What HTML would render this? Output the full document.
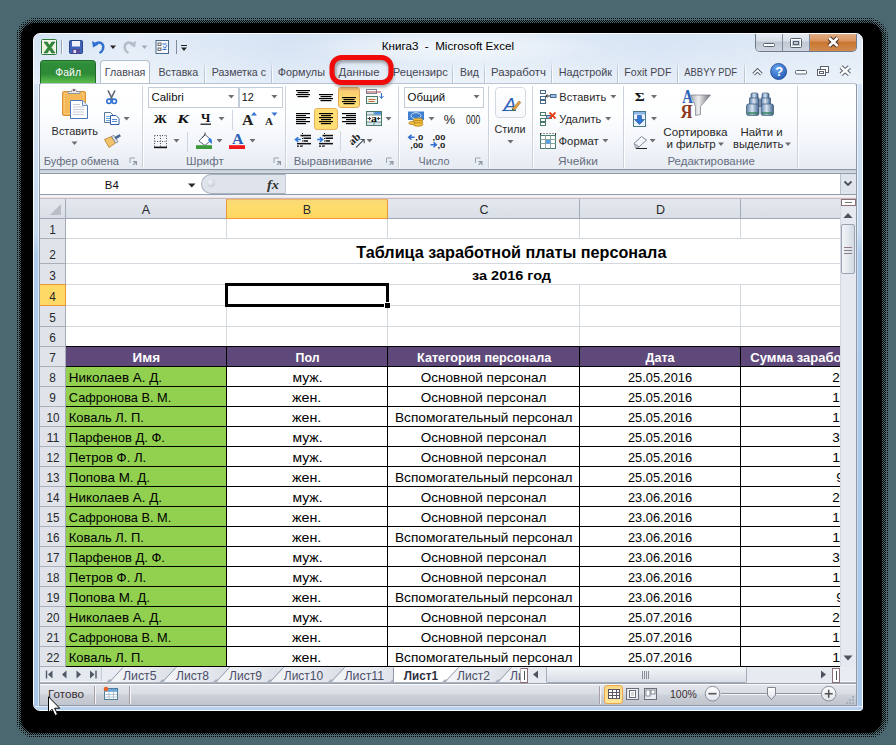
<!DOCTYPE html>
<html><head><meta charset="utf-8">
<title>Excel</title>
<style>
*{box-sizing:border-box;margin:0;padding:0}
html,body{width:896px;height:745px;overflow:hidden}
body{background:#4b6770;font-family:"Liberation Sans",sans-serif;position:relative;font-size:12px;color:#222}
.abs{position:absolute}
#shadow2{position:absolute;left:16px;top:18px;width:872px;height:720px;border-radius:19px;background:repeating-conic-gradient(#000 0 25%,transparent 0 100%) 0 0/2px 2px}
#shadow3{position:absolute;left:19px;top:21px;width:866px;height:714px;border-radius:16px;background:repeating-conic-gradient(#000 0 25%,transparent 0 50%,#000 0 75%,transparent 0 100%) 0 0/2px 2px}
#shadow{position:absolute;left:21px;top:23px;width:861px;height:710px;border-radius:14px;background:#000}
#win{position:absolute;left:33px;top:33px;width:830px;height:678px;border-radius:7px 7px 3px 7px;
 background:linear-gradient(180deg,#d3e2f3 0,#dbe7f5 26px,#e4edf8 50px,#dde8f5 150px,#d3e2f3 195px,#aecaea 212px,#a9c7e9 100%);border:1px solid #fbfdff;overflow:hidden}
#pg{position:absolute;left:-34px;top:-34px;width:896px;height:745px}
.t{position:absolute;white-space:nowrap;line-height:1}
.tab{position:absolute;top:66px;font-size:12px;color:#3c3c3c;white-space:nowrap;line-height:14px}
.tsep{position:absolute;top:62px;width:1px;height:21px;background:linear-gradient(180deg,rgba(160,175,195,0) 0,#b4c0d0 60%,#b4c0d0 100%)}
.cb{font-size:14px;letter-spacing:-0.2px;color:#000}
.ch{font-size:13.5px;color:#27282a}
.rh{font-size:13.5px;color:#27282a}
.rl{font-size:12px;color:#555e6b}
.rt{font-size:12px;color:#1e1e1e}
</style></head><body>
<div id="shadow2"></div><div id="shadow3"></div><div id="shadow"></div>
<div id="win"><div id="pg">
<div class="abs" style="left:300px;top:30px;width:300px;height:34px;background:radial-gradient(ellipse at center,rgba(255,255,255,.55) 0,rgba(255,255,255,.25) 45%,rgba(255,255,255,0) 72%)"></div>
<div class="abs" style="left:34px;top:34px;width:828px;height:50px;background:linear-gradient(100deg,rgba(255,255,255,0) 0,rgba(255,255,255,.35) 12%,rgba(255,255,255,0) 30%,rgba(255,255,255,.3) 55%,rgba(255,255,255,.05) 75%,rgba(255,255,255,.3) 100%)"></div>
<div class="abs" style="left:40px;top:60px;width:56px;height:24px;border-radius:4px 4px 0 0;border:1px solid #1f6b2c;border-bottom:none;background:linear-gradient(180deg,#3a9a40 0,#2f8c38 12%,#2d8a37 55%,#44a544 75%,#62c24a 100%)"></div>
<div class="abs" style="left:100px;top:60px;width:50px;height:25px;border-radius:4px 4px 0 0;border:1px solid #b4bfcd;border-bottom:none;background:linear-gradient(180deg,#fbfcfe 0,#ffffff 100%)"></div>
<div class="abs" style="left:204px;top:61px;width:2px;height:22px;background:linear-gradient(90deg,#b9c4d3 0,#b9c4d3 50%,rgba(255,255,255,.8) 50%);-webkit-mask-image:linear-gradient(180deg,transparent 0,#000 50%)"></div>
<div class="abs" style="left:271px;top:61px;width:2px;height:22px;background:linear-gradient(90deg,#b9c4d3 0,#b9c4d3 50%,rgba(255,255,255,.8) 50%);-webkit-mask-image:linear-gradient(180deg,transparent 0,#000 50%)"></div>
<div class="abs" style="left:452px;top:61px;width:2px;height:22px;background:linear-gradient(90deg,#b9c4d3 0,#b9c4d3 50%,rgba(255,255,255,.8) 50%);-webkit-mask-image:linear-gradient(180deg,transparent 0,#000 50%)"></div>
<div class="abs" style="left:484px;top:61px;width:2px;height:22px;background:linear-gradient(90deg,#b9c4d3 0,#b9c4d3 50%,rgba(255,255,255,.8) 50%);-webkit-mask-image:linear-gradient(180deg,transparent 0,#000 50%)"></div>
<div class="abs" style="left:551px;top:61px;width:2px;height:22px;background:linear-gradient(90deg,#b9c4d3 0,#b9c4d3 50%,rgba(255,255,255,.8) 50%);-webkit-mask-image:linear-gradient(180deg,transparent 0,#000 50%)"></div>
<div class="abs" style="left:617px;top:61px;width:2px;height:22px;background:linear-gradient(90deg,#b9c4d3 0,#b9c4d3 50%,rgba(255,255,255,.8) 50%);-webkit-mask-image:linear-gradient(180deg,transparent 0,#000 50%)"></div>
<div class="abs" style="left:677px;top:61px;width:2px;height:22px;background:linear-gradient(90deg,#b9c4d3 0,#b9c4d3 50%,rgba(255,255,255,.8) 50%);-webkit-mask-image:linear-gradient(180deg,transparent 0,#000 50%)"></div>
<div class="abs" style="left:744px;top:61px;width:2px;height:22px;background:linear-gradient(90deg,#b9c4d3 0,#b9c4d3 50%,rgba(255,255,255,.8) 50%);-webkit-mask-image:linear-gradient(180deg,transparent 0,#000 50%)"></div>
<div class="abs" style="left:755px;top:33px;width:102px;height:19px;border:1px solid #6f7b8c;border-top:none;border-radius:0 0 5px 5px;overflow:hidden;background:#c9d3e0"><div class="abs" style="left:0;top:0;width:27px;height:18px;background:linear-gradient(180deg,#e9edf3 0,#d9dfe8 45%,#c0c8d4 50%,#cfd6e0 100%);border-right:1px solid #7f8a9a"></div><div class="abs" style="left:27px;top:0;width:27px;height:18px;background:linear-gradient(180deg,#e9edf3 0,#d9dfe8 45%,#c0c8d4 50%,#cfd6e0 100%);border-right:1px solid #7f8a9a"></div><div class="abs" style="left:54px;top:0;width:47px;height:18px;background:linear-gradient(180deg,#e4b088 0,#d9935e 45%,#c9762f 50%,#d08a4e 100%)"></div></div>
<svg class="abs" style="left:0;top:0" width="896" height="745" font-family="Liberation Sans">
<text x="381.8" y="50.0" font-size="11" font-weight="normal" font-style="normal" font-family="Liberation Sans" fill="#000" textLength="132.2" lengthAdjust="spacingAndGlyphs">Книга3&#160; -&#160; Microsoft Excel</text>
<text x="55.3" y="76.0" font-size="11" font-weight="normal" font-style="normal" font-family="Liberation Sans" fill="#fff" textLength="25.7" lengthAdjust="spacingAndGlyphs">Файл</text>
<text x="104.8" y="76.0" font-size="11" font-weight="normal" font-style="normal" font-family="Liberation Sans" fill="#454552" textLength="40.6" lengthAdjust="spacingAndGlyphs">Главная</text>
<text x="158.5" y="76.0" font-size="11" font-weight="normal" font-style="normal" font-family="Liberation Sans" fill="#454552" textLength="39.7" lengthAdjust="spacingAndGlyphs">Вставка</text>
<text x="211.8" y="76.0" font-size="11" font-weight="normal" font-style="normal" font-family="Liberation Sans" fill="#454552" textLength="54.2" lengthAdjust="spacingAndGlyphs">Разметка с</text>
<text x="277.8" y="76.0" font-size="11" font-weight="normal" font-style="normal" font-family="Liberation Sans" fill="#454552" textLength="47.2" lengthAdjust="spacingAndGlyphs">Формулы</text>
<text x="338.5" y="76.0" font-size="11" font-weight="normal" font-style="normal" font-family="Liberation Sans" fill="#454552" textLength="41.0" lengthAdjust="spacingAndGlyphs">Данные</text>
<text x="392.8" y="76.0" font-size="11" font-weight="normal" font-style="normal" font-family="Liberation Sans" fill="#454552" textLength="55.0" lengthAdjust="spacingAndGlyphs">Рецензирс</text>
<text x="460.0" y="76.0" font-size="11" font-weight="normal" font-style="normal" font-family="Liberation Sans" fill="#454552" textLength="18.8" lengthAdjust="spacingAndGlyphs">Вид</text>
<text x="491.0" y="76.0" font-size="11" font-weight="normal" font-style="normal" font-family="Liberation Sans" fill="#454552" textLength="55.0" lengthAdjust="spacingAndGlyphs">Разработч</text>
<text x="558.8" y="76.0" font-size="11" font-weight="normal" font-style="normal" font-family="Liberation Sans" fill="#454552" textLength="53.2" lengthAdjust="spacingAndGlyphs">Надстройк</text>
<text x="624.3" y="76.0" font-size="11" font-weight="normal" font-style="normal" font-family="Liberation Sans" fill="#454552" textLength="47.1" lengthAdjust="spacingAndGlyphs">Foxit PDF</text>
<text x="684.3" y="76.0" font-size="11" font-weight="normal" font-style="normal" font-family="Liberation Sans" fill="#454552" textLength="52.7" lengthAdjust="spacingAndGlyphs">ABBYY PDF</text>
<rect x="763.500" y="43.500" width="11" height="3" rx="1" fill="#fff" stroke="#555f6e" stroke-width="1"/>
<rect x="790.500" y="38.500" width="11" height="9" rx="1" fill="none" stroke="#555f6e" stroke-width="1"/><rect x="791.500" y="39.500" width="9" height="7" fill="none" stroke="#fff" stroke-width="1"/><rect x="793.500" y="41.500" width="5" height="3" fill="none" stroke="#555f6e" stroke-width="1"/>
<g stroke-linecap="butt" fill="none"><path d="M829.200 38 l8.400 8 M837.600 38 l-8.400 8" stroke="#4a3328" stroke-width="4.600"/><path d="M829.200 38 l8.400 8 M837.600 38 l-8.400 8" stroke="#fff" stroke-width="2.600"/></g>
<g fill="none" stroke-linejoin="miter"><path d="M753.600 74.300 l3.900-3.900 3.900 3.900" stroke="#5a6270" stroke-width="3.600"/><path d="M753.600 74.300 l3.900-3.900 3.900 3.900" stroke="#fff" stroke-width="1.600"/></g>
<defs><radialGradient id="hg" cx=".4" cy=".3" r=".8"><stop offset="0" stop-color="#6aa5ee"/><stop offset="1" stop-color="#1d56b0"/></radialGradient></defs><circle cx="778.600" cy="71.500" r="8" fill="url(#hg)" stroke="#1a4a9a" stroke-width=".8"/><text x="775.200" y="76.300" font-size="13" font-weight="bold" fill="#fff">?</text>
<rect x="795.500" y="70.500" width="11" height="3.500" rx="1" fill="#fff" stroke="#5a6270" stroke-width="1"/>
<g fill="none" stroke="#5a6270" stroke-width="1"><rect x="820.500" y="66.500" width="8" height="6" fill="#fff"/><rect x="817.500" y="69.500" width="8" height="6" fill="#fff"/><rect x="819.500" y="71.500" width="4" height="2"/></g>
<g fill="none"><path d="M841 67 l8.400 7.400 M849.400 67 l-8.400 7.400" stroke="#5a6270" stroke-width="4.400"/><path d="M841 67 l8.400 7.400 M849.400 67 l-8.400 7.400" stroke="#fff" stroke-width="2.400"/></g>
<rect x="41.500" y="39.500" width="15" height="15" rx="1" fill="#f4f8f0" stroke="#2f7a3a" stroke-width="1"/><rect x="43" y="41" width="12" height="12" fill="#e8f3d8"/><path d="M44 42 l3.200 0 2.300 3.600 2.300-3.600 3.200 0 -3.900 5.500 3.900 5.500 -3.200 0 -2.300-3.600 -2.300 3.600 -3.200 0 3.900-5.500z" fill="#2f8a3a" stroke="#1a5a2a" stroke-width=".5"/>
<path d="M61.500 40 v14" stroke="#9aa5b5"/><path d="M62.500 40 v14" stroke="#fff" opacity=".7"/>
<rect x="69.500" y="40.500" width="13" height="13" rx="1" fill="#3f63b8" stroke="#27448a"/><rect x="72" y="41" width="8" height="5.500" fill="#eef2f8"/><rect x="72" y="49" width="8" height="4.500" fill="#5a4a9a"/><rect x="73.500" y="50" width="2.500" height="3" fill="#dfe5f0"/>
<path d="M95 44 c5-3.500 9.500 0 8 5 c-.5 1.800 -1.800 3.200 -3.500 4" fill="none" stroke="#2f6fd0" stroke-width="2.400"/><path d="M92 41 l1 6.500 5.500-3z" fill="#2f6fd0"/>
<path d="M110 45.500 h6 l-3 3.500z" fill="#222"/>
<path d="M133 44 c-5-3.500 -9.500 0 -8 5 c.5 1.800 1.800 3.200 3.500 4" fill="none" stroke="#b5bcc8" stroke-width="2.400"/><path d="M136 41 l-1 6.500 -5.500-3z" fill="#b5bcc8"/>
<path d="M141.500 45.500 h6 l-3 3.500z" fill="#a5acb8"/>
<rect x="156" y="40.500" width="12.500" height="13" fill="#f4f7fb" stroke="#4a6a8a"/><rect x="158" y="43" width="3" height="2.500" fill="none" stroke="#444" stroke-width=".8"/><rect x="158" y="48" width="3" height="2.500" fill="none" stroke="#444" stroke-width=".8"/><path d="M162.500 44 h4 M162.500 49.500 h4" stroke="#2f6fd0" stroke-width="1.200"/><path d="M163 46.500 l2 1.800 2-3" stroke="#2f6fd0" fill="none"/>
<path d="M176.500 40 v14" stroke="#7f8a9a"/>
<path d="M181 45.500 h6" stroke="#222" stroke-width="1.200"/><path d="M181 47.500 h6 l-3 3.500z" fill="#222"/>
</svg>
<div class="abs" style="left:39px;top:83px;width:818px;height:87px;background:linear-gradient(180deg,#ffffff 0,#fdfeff 30px,#f1f4f9 62px,#e6ebf2 100%);border:1px solid #b9c3d1;border-bottom:1px solid #8b96a7;border-radius:3px 3px 0 0"></div>
<div class="abs" style="left:39px;top:170px;width:818px;height:4px;background:linear-gradient(180deg,#c9d2de 0,#e9eef5 100%)"></div>
<div class="abs" style="left:142px;top:86px;width:2px;height:82px;background:linear-gradient(90deg,#c6ced9 0,#c6ced9 50%,#ffffff 50%,#fff 100%);opacity:.9"></div>
<div class="abs" style="left:285px;top:86px;width:2px;height:82px;background:linear-gradient(90deg,#c6ced9 0,#c6ced9 50%,#ffffff 50%,#fff 100%);opacity:.9"></div>
<div class="abs" style="left:398px;top:86px;width:2px;height:82px;background:linear-gradient(90deg,#c6ced9 0,#c6ced9 50%,#ffffff 50%,#fff 100%);opacity:.9"></div>
<div class="abs" style="left:488px;top:86px;width:2px;height:82px;background:linear-gradient(90deg,#c6ced9 0,#c6ced9 50%,#ffffff 50%,#fff 100%);opacity:.9"></div>
<div class="abs" style="left:532px;top:86px;width:2px;height:82px;background:linear-gradient(90deg,#c6ced9 0,#c6ced9 50%,#ffffff 50%,#fff 100%);opacity:.9"></div>
<div class="abs" style="left:623px;top:86px;width:2px;height:82px;background:linear-gradient(90deg,#c6ced9 0,#c6ced9 50%,#ffffff 50%,#fff 100%);opacity:.9"></div>
<div class="abs" style="left:797px;top:86px;width:2px;height:82px;background:linear-gradient(90deg,#c6ced9 0,#c6ced9 50%,#ffffff 50%,#fff 100%);opacity:.9"></div>
<div class="abs" style="left:148px;top:87px;width:91px;height:21px;background:#fff;border:1px solid #c3ccd9"></div>
<div class="abs" style="left:239px;top:87px;width:44px;height:21px;background:#fff;border:1px solid #c3ccd9"></div>
<div class="abs" style="left:404px;top:87px;width:80px;height:21px;background:#fff;border:1px solid #c3ccd9"></div>
<div class="abs" style="left:338px;top:87px;width:22px;height:21px;background:linear-gradient(180deg,#f9c27a 0,#fbd36e 35%,#ffe27a 100%);border:1px solid #e3a558;border-radius:3px"></div>
<div class="abs" style="left:314px;top:108px;width:24px;height:22px;background:#ffdf73;border:1px solid #e9b461;border-radius:3px"></div>
<div class="abs" style="left:495px;top:87px;width:31px;height:31px;background:linear-gradient(180deg,#fff,#f6f8fb);border:1px solid #d3d9e2;border-radius:4px"></div>
<div class="abs" style="left:232px;top:110px;width:1px;height:20px;background:#d0d6df"></div>
<div class="abs" style="left:187px;top:132px;width:1px;height:20px;background:#d0d6df"></div>
<div class="abs" style="left:340px;top:131px;width:1px;height:20px;background:#d0d6df"></div>
<svg class="abs" style="left:0;top:0" width="896" height="745" font-family="Liberation Sans">
<text x="43.8" y="165.0" font-size="11" font-weight="normal" font-style="normal" font-family="Liberation Sans" fill="#656d7d" textLength="75.2" lengthAdjust="spacingAndGlyphs">Буфер обмена</text>
<text x="186.0" y="165.0" font-size="11" font-weight="normal" font-style="normal" font-family="Liberation Sans" fill="#656d7d" textLength="37.7" lengthAdjust="spacingAndGlyphs">Шрифт</text>
<text x="293.7" y="165.0" font-size="11" font-weight="normal" font-style="normal" font-family="Liberation Sans" fill="#656d7d" textLength="78.7" lengthAdjust="spacingAndGlyphs">Выравнивание</text>
<text x="418.5" y="165.0" font-size="11" font-weight="normal" font-style="normal" font-family="Liberation Sans" fill="#656d7d" textLength="30.9" lengthAdjust="spacingAndGlyphs">Число</text>
<text x="558.0" y="165.0" font-size="11" font-weight="normal" font-style="normal" font-family="Liberation Sans" fill="#656d7d" textLength="39.8" lengthAdjust="spacingAndGlyphs">Ячейки</text>
<text x="667.4" y="165.0" font-size="11" font-weight="normal" font-style="normal" font-family="Liberation Sans" fill="#656d7d" textLength="87.5" lengthAdjust="spacingAndGlyphs">Редактирование</text>
<path d="M130 163.0 v-5 h5" fill="none" stroke="#9aa3b0" stroke-width="1"/><path d="M133 161.0 h4 v4 h-1.2 v-2 l-2.3 2.3 -0.8 -0.8 2.3 -2.3 h-2z" fill="#8d96a3"/>
<path d="M274 163.0 v-5 h5" fill="none" stroke="#9aa3b0" stroke-width="1"/><path d="M277 161.0 h4 v4 h-1.2 v-2 l-2.3 2.3 -0.8 -0.8 2.3 -2.3 h-2z" fill="#8d96a3"/>
<path d="M386.5 163.0 v-5 h5" fill="none" stroke="#9aa3b0" stroke-width="1"/><path d="M389.5 161.0 h4 v4 h-1.2 v-2 l-2.3 2.3 -0.8 -0.8 2.3 -2.3 h-2z" fill="#8d96a3"/>
<path d="M475.5 163.0 v-5 h5" fill="none" stroke="#9aa3b0" stroke-width="1"/><path d="M478.5 161.0 h4 v4 h-1.2 v-2 l-2.3 2.3 -0.8 -0.8 2.3 -2.3 h-2z" fill="#8d96a3"/>
<text x="51.6" y="135.0" font-size="11" font-weight="normal" font-style="normal" font-family="Liberation Sans" fill="#2a2a2a" textLength="46.3" lengthAdjust="spacingAndGlyphs">Вставить</text>
<path d="M71.5 141.5 h6 l-3 3.5z" fill="#6e6e6e"/>
<text x="151.4" y="101.0" font-size="11" font-weight="normal" font-style="normal" font-family="Liberation Sans" fill="#111" textLength="32.5" lengthAdjust="spacingAndGlyphs">Calibri</text>
<text x="241.8" y="101.0" font-size="11" font-weight="normal" font-style="normal" font-family="Liberation Sans" fill="#111" textLength="12.0" lengthAdjust="spacingAndGlyphs">12</text>
<path d="M228.2 95.0 h6 l-3 3.5z" fill="#6e6e6e"/>
<path d="M271.4 95.0 h6 l-3 3.5z" fill="#6e6e6e"/>
<text x="407.6" y="101.0" font-size="11" font-weight="normal" font-style="normal" font-family="Liberation Sans" fill="#111" textLength="37.6" lengthAdjust="spacingAndGlyphs">Общий</text>
<path d="M473.5 95.0 h6 l-3 3.5z" fill="#6e6e6e"/>
<text x="494.6" y="133.0" font-size="11" font-weight="normal" font-style="normal" font-family="Liberation Sans" fill="#2a2a2a" textLength="31.0" lengthAdjust="spacingAndGlyphs">Стили</text>
<path d="M507.5 140.0 h6 l-3 3.5z" fill="#6e6e6e"/>
<text x="559.3" y="101.0" font-size="11" font-weight="normal" font-style="normal" font-family="Liberation Sans" fill="#2a2a2a" textLength="46.9" lengthAdjust="spacingAndGlyphs">Вставить</text>
<path d="M610.4 95.0 h6 l-3 3.5z" fill="#6e6e6e"/>
<text x="559.3" y="123.0" font-size="11" font-weight="normal" font-style="normal" font-family="Liberation Sans" fill="#2a2a2a" textLength="41.9" lengthAdjust="spacingAndGlyphs">Удалить</text>
<path d="M605.2 117.0 h6 l-3 3.5z" fill="#6e6e6e"/>
<text x="558.5" y="145.0" font-size="11" font-weight="normal" font-style="normal" font-family="Liberation Sans" fill="#2a2a2a" textLength="40.2" lengthAdjust="spacingAndGlyphs">Формат</text>
<path d="M602.4 139.0 h6 l-3 3.5z" fill="#6e6e6e"/>
<text x="663.3" y="136.0" font-size="11" font-weight="normal" font-style="normal" font-family="Liberation Sans" fill="#2a2a2a" textLength="64.3" lengthAdjust="spacingAndGlyphs">Сортировка</text>
<text x="666.4" y="148.0" font-size="11" font-weight="normal" font-style="normal" font-family="Liberation Sans" fill="#2a2a2a" textLength="49.2" lengthAdjust="spacingAndGlyphs">и фильтр</text>
<path d="M718 142.5 h6 l-3 3.5z" fill="#6e6e6e"/>
<text x="740.4" y="136.0" font-size="11" font-weight="normal" font-style="normal" font-family="Liberation Sans" fill="#2a2a2a" textLength="42.2" lengthAdjust="spacingAndGlyphs">Найти и</text>
<text x="733.0" y="148.0" font-size="11" font-weight="normal" font-style="normal" font-family="Liberation Sans" fill="#2a2a2a" textLength="50.3" lengthAdjust="spacingAndGlyphs">выделить</text>
<path d="M785 142.5 h6 l-3 3.5z" fill="#6e6e6e"/>
<text x="153.7" y="123.0" font-size="13" font-weight="bold" font-style="normal" font-family="Liberation Serif" fill="#111" textLength="13.1" lengthAdjust="spacingAndGlyphs">Ж</text>
<text x="177.2" y="123.0" font-size="13" font-weight="bold" font-style="italic" font-family="Liberation Serif" fill="#111" textLength="11.7" lengthAdjust="spacingAndGlyphs">К</text>
<text x="201.0" y="122.2" font-size="13" font-weight="bold" font-style="normal" font-family="Liberation Serif" fill="#111" textLength="9.3" lengthAdjust="spacingAndGlyphs">Ч</text>
<rect x="200.5" y="123.6" width="10.5" height="1.2" fill="#111"/>
<path d="M218.5 117.0 h6 l-3 3.5z" fill="#6e6e6e"/>
<text x="242.0" y="124.7" font-size="15" font-weight="bold" font-style="normal" font-family="Liberation Serif" fill="#222" textLength="11.5" lengthAdjust="spacingAndGlyphs">A</text>
<path d="M251 115.5 l3-3.5 3 3.5z" fill="#2f6fd0"/>
<text x="265.0" y="124.7" font-size="11" font-weight="bold" font-style="normal" font-family="Liberation Serif" fill="#222" textLength="8.0" lengthAdjust="spacingAndGlyphs">A</text>
<path d="M271.5 112.5 h6 l-3 3.5z" fill="#2f6fd0"/>
<g stroke="#555" stroke-width="1" stroke-dasharray="1 1.5" fill="none"><path d="M154.5 135.5 h12 M154.5 141.5 h12 M154.5 135.5 v12 M160.5 135.5 v12 M166.5 135.5 v12"/></g><rect x="154" y="146.6" width="13" height="1.6" fill="#111"/>
<path d="M173.5 139.0 h6 l-3 3.5z" fill="#6e6e6e"/>
<path d="M199 141 l6-6.5 6 5.5 -6 5.5z" fill="#fff" stroke="#5a6b80" stroke-width="1"/><path d="M202 138 l3-3 0-2.5" fill="none" stroke="#444" stroke-width="1"/><path d="M209.5 138 c2.5 0.5 3 3.5 2 6 c-1.5 -2 -2.5 -3 -3.5 -4z" fill="#2f78d8"/><rect x="196" y="145.2" width="16" height="3.8" fill="#3c9a3c"/>
<path d="M216.5 139.0 h6 l-3 3.5z" fill="#6e6e6e"/>
<text x="232.0" y="144.0" font-size="14" font-weight="bold" font-style="normal" font-family="Liberation Serif" fill="#2b62b8" textLength="11.5" lengthAdjust="spacingAndGlyphs">A</text>
<rect x="229" y="145.2" width="16" height="3.8" fill="#f01818"/>
<path d="M249.5 139.0 h6 l-3 3.5z" fill="#6e6e6e"/>
<rect x="296.0" y="90.0" width="14" height="1.2" fill="#000"/><rect x="297.5" y="92.0" width="11" height="1.2" fill="#000"/><rect x="296.0" y="94.0" width="14" height="1.2" fill="#000"/><rect x="297.5" y="96.0" width="11" height="1.2" fill="#000"/>
<rect x="319.0" y="94.0" width="14" height="1.2" fill="#000"/><rect x="320.5" y="96.0" width="11" height="1.2" fill="#000"/><rect x="319.0" y="98.0" width="14" height="1.2" fill="#000"/><rect x="320.5" y="100.0" width="11" height="1.2" fill="#000"/>
<rect x="342.0" y="97.0" width="14" height="1.2" fill="#000"/><rect x="343.5" y="99.0" width="11" height="1.2" fill="#000"/><rect x="342.0" y="101.0" width="14" height="1.2" fill="#000"/><rect x="343.5" y="103.0" width="11" height="1.2" fill="#000"/>
<rect x="340.5" y="88.6" width="17" height="1" fill="#d89a4a" opacity=".6"/>
<rect x="296.0" y="113.0" width="14" height="1.2" fill="#000"/><rect x="296.0" y="115.0" width="10" height="1.2" fill="#000"/><rect x="296.0" y="117.0" width="14" height="1.2" fill="#000"/><rect x="296.0" y="119.0" width="10" height="1.2" fill="#000"/><rect x="296.0" y="121.0" width="14" height="1.2" fill="#000"/><rect x="296.0" y="123.0" width="10" height="1.2" fill="#000"/>
<rect x="319.0" y="113.0" width="14" height="1.2" fill="#000"/><rect x="321.0" y="115.0" width="10" height="1.2" fill="#000"/><rect x="319.0" y="117.0" width="14" height="1.2" fill="#000"/><rect x="321.0" y="119.0" width="10" height="1.2" fill="#000"/><rect x="319.0" y="121.0" width="14" height="1.2" fill="#000"/><rect x="321.0" y="123.0" width="10" height="1.2" fill="#000"/>
<rect x="342.0" y="113.0" width="14" height="1.2" fill="#000"/><rect x="346.0" y="115.0" width="10" height="1.2" fill="#000"/><rect x="342.0" y="117.0" width="14" height="1.2" fill="#000"/><rect x="346.0" y="119.0" width="10" height="1.2" fill="#000"/><rect x="342.0" y="121.0" width="14" height="1.2" fill="#000"/><rect x="346.0" y="123.0" width="10" height="1.2" fill="#000"/>
<g fill="none" stroke-width="1"><rect x="366.5" y="89.5" width="10" height="4" stroke="#7b8a9a" fill="#fff"/><path d="M366 92 h15" stroke="#b0455a"/><rect x="366.5" y="96.5" width="11" height="7" stroke="#4a7a6a" fill="#eef3ee"/><path d="M368.5 99.5 h7 M368.5 101.5 h6" stroke="#c2703a"/><path d="M381.5 93 v5 m-2 -2 l2 2.5 2 -2.5" stroke="#2f6fd0"/></g>
<g><rect x="366.500" y="111.500" width="15" height="14" fill="#d9e6f2" stroke="#4a7a6a"/><rect x="367" y="115" width="14" height="7" fill="#fff"/><path d="M366.500 115 h15 M366.500 122 h15" stroke="#4a7a6a" stroke-width=".8"/><path d="M374 111.500 v3.500 M374 122 v3.500" stroke="#6d9a8a"/><rect x="374.500" y="112" width="6.500" height="2.500" fill="#4f8fe0"/><path d="M367.500 118.500 h3 m-1.500-1.500 l1.700 1.500 -1.700 1.500 M380.500 118.500 h-3 m1.500-1.500 l-1.700 1.500 1.700 1.500" stroke="#222" fill="none" stroke-width=".9"/><text x="371" y="121.500" font-size="9.500" font-weight="bold" font-family="Liberation Serif" fill="#111" textLength="6" lengthAdjust="spacingAndGlyphs">a</text></g>
<path d="M385.5 117.0 h6 l-3 3.5z" fill="#6e6e6e"/>
<rect x="300.5" y="134.8" width="10.5" height="1.5" fill="#111"/><rect x="303.5" y="137.5" width="7.5" height="1.5" fill="#111"/><rect x="303.5" y="140.2" width="4.5" height="1.5" fill="#111"/><rect x="297" y="142.9" width="14" height="1.5" fill="#111"/><path d="M297 146.2 h6" stroke="#111" stroke-width="1.2" stroke-dasharray="2 1"/><path d="M302.5 133 v15" stroke="#111" stroke-width="1" stroke-dasharray="1 1.5"/><path d="M300.8 139.6 h-5 m2.4-2.400 l-2.800 2.400 2.800 2.400" fill="none" stroke="#2f78d8" stroke-width="1.500"/>
<rect x="322.5" y="134.8" width="10.5" height="1.5" fill="#111"/><rect x="325.5" y="137.5" width="7.5" height="1.5" fill="#111"/><rect x="325.5" y="140.2" width="4.5" height="1.5" fill="#111"/><rect x="319" y="142.9" width="14" height="1.5" fill="#111"/><path d="M319 146.2 h6" stroke="#111" stroke-width="1.2" stroke-dasharray="2 1"/><path d="M324.5 133 v15" stroke="#111" stroke-width="1" stroke-dasharray="1 1.5"/><path d="M317.3 139.6 h5 m-2.400-2.400 l2.800 2.400 -2.800 2.400" fill="none" stroke="#2f78d8" stroke-width="1.500"/>
<g transform="translate(355.500,139.500) rotate(-42)"><text x="-6.500" y="2.500" font-size="11" font-weight="bold" font-family="Liberation Serif" fill="#222" textLength="12" lengthAdjust="spacingAndGlyphs">ab</text></g><path d="M356 147.500 l8-7.800 m-3.600-.200 l3.800 0 0 3.800" fill="none" stroke="#4a5260" stroke-width="1.100"/>
<path d="M366.6 139.0 h6 l-3 3.5z" fill="#6e6e6e"/>
<g><rect x="408" y="111.5" width="16" height="8.5" fill="#3f7fd0"/><ellipse cx="416" cy="115.7" rx="5" ry="3" fill="none" stroke="#cfe0f5"/><ellipse cx="418" cy="120" rx="5" ry="1.8" fill="#f0c040" stroke="#b07a18" stroke-width=".7"/><ellipse cx="418" cy="122.2" rx="5" ry="1.8" fill="#f0c040" stroke="#b07a18" stroke-width=".7"/><ellipse cx="418" cy="124.4" rx="5" ry="1.8" fill="#f0c040" stroke="#b07a18" stroke-width=".7"/><ellipse cx="412" cy="123" rx="3.2" ry="1.5" fill="#f0c040" stroke="#b07a18" stroke-width=".7"/></g>
<path d="M428.5 117.0 h6 l-3 3.5z" fill="#6e6e6e"/>
<text x="443.8" y="123.8" font-size="13" font-weight="normal" font-style="normal" font-family="Liberation Sans" fill="#1a1a1a" textLength="11.4" lengthAdjust="spacingAndGlyphs">%</text>
<text x="466.0" y="123.8" font-size="12" font-weight="normal" font-style="normal" font-family="Liberation Sans" fill="#1a1a1a" textLength="14.2" lengthAdjust="spacingAndGlyphs">000</text>
<g font-size="7.500" font-weight="bold" fill="#1a1a1a"><text x="415.300" y="140" textLength="8" lengthAdjust="spacingAndGlyphs">,0</text><text x="410.300" y="147.500" textLength="13" lengthAdjust="spacingAndGlyphs">,00</text><text x="432.400" y="140" textLength="13" lengthAdjust="spacingAndGlyphs">,00</text><text x="437.400" y="147.500" textLength="8" lengthAdjust="spacingAndGlyphs">,0</text></g>
<path d="M414.500 137.300 h-5.500 m2.500-2.400 l-2.800 2.400 2.800 2.400" fill="none" stroke="#2f6fd0" stroke-width="1.500"/><path d="M430.500 144.800 h5.500 m-2.500-2.400 l2.800 2.400 -2.800 2.400" fill="none" stroke="#2f6fd0" stroke-width="1.500"/>
<text x="503.5" y="111" font-size="19" font-style="italic" font-family="Liberation Sans" fill="#2b62b8" textLength="13" lengthAdjust="spacingAndGlyphs">A</text><path d="M502 110.5 h14" stroke="#2b62b8" stroke-width="1.2"/><path d="M512 109 l7-8 1.8 1.5 -6.5 8z" fill="#e5a040" stroke="#7a5a20" stroke-width=".5"/><path d="M511 111 l1.5-2.5 2 1.8z" fill="#3a7a4a"/>
<g fill="#fff" stroke="#4a6a8a" stroke-width="1"><rect x="540.5" y="90.5" width="5" height="3"/><rect x="540.5" y="96.5" width="5" height="3"/><rect x="540.5" y="100.5" width="5" height="3"/><rect x="550.5" y="94.5" width="5.5" height="3" fill="#9cc3ee"/></g><path d="M550 96 h-4 m1.5-1.5 l-1.7 1.5 1.7 1.5" fill="none" stroke="#222" stroke-width="1"/>
<g fill="#fff" stroke="#4a7a6a" stroke-width="1"><rect x="540.5" y="112.5" width="5" height="3"/><rect x="540.5" y="118.5" width="5" height="3"/><rect x="540.5" y="122.5" width="5" height="3"/><rect x="546.5" y="115.5" width="5" height="3" fill="#9cc3ee" stroke="#4a6a8a"/></g><path d="M549.5 112.5 l6 6 m0-6 l-6 6" stroke="#e8421a" stroke-width="1.8"/>
<g><rect x="540.5" y="135.5" width="15" height="13" fill="#fff" stroke="#4a7a6a"/><path d="M540.5 139.5 h15 M540.5 143.5 h15 M545.5 135.5 v13 M550.5 135.5 v13" stroke="#8aa89a"/><rect x="546" y="140" width="4.5" height="3.5" fill="#5aa0e8"/><path d="M540.5 133.5 h15" stroke="#333" stroke-dasharray="1 2"/><path d="M540.5 133 v2 M555.5 133 v2" stroke="#333"/></g>
<text x="634.7" y="101.0" font-size="13" font-weight="bold" font-style="normal" font-family="Liberation Serif" fill="#111" textLength="10.0" lengthAdjust="spacingAndGlyphs">Σ</text>
<path d="M651 95.0 h6 l-3 3.5z" fill="#6e6e6e"/>
<rect x="633.5" y="111.5" width="12" height="15" fill="#eaf2fb" stroke="#4a7a8a"/><rect x="634" y="112" width="11" height="2.5" fill="#8fb8e8"/><path d="M637.5 115.5 h4 v4 h3 l-5 5 -5-5 h3z" fill="#2f78d8" stroke="#1c4f9a" stroke-width=".6"/>
<path d="M651 117.0 h6 l-3 3.5z" fill="#6e6e6e"/>
<path d="M634 143.5 l7.5-7 5 3.5 -7.5 7z" fill="#f4f6fa" stroke="#7d8796" stroke-width="1"/><path d="M634 143.5 l5 3.5 -1.5 1 h-2z" fill="#c8ced8" stroke="#7d8796" stroke-width=".6"/><path d="M636 148.5 h11" stroke="#222" stroke-width="1.2"/>
<path d="M649.6 139.0 h6 l-3 3.5z" fill="#6e6e6e"/>
<text x="682.300" y="102.800" font-size="18" font-weight="bold" font-family="Liberation Serif" fill="#2b62b8" textLength="10.600" lengthAdjust="spacingAndGlyphs">A</text><text x="680.600" y="117.800" font-size="18" font-weight="bold" font-family="Liberation Serif" fill="#8a3a22" textLength="12" lengthAdjust="spacingAndGlyphs">Я</text>
<defs><linearGradient id="fg" x1="0" x2="1"><stop offset="0" stop-color="#a4a8b0"/><stop offset=".4" stop-color="#eeeef0"/><stop offset="1" stop-color="#6e7079"/></linearGradient></defs><path d="M690.500 95 H710.500 L700.500 106.500 V114.500 L695.500 115.500 V106.500 Z" fill="url(#fg)" stroke="#7a7d86" stroke-width=".7"/>
<defs><linearGradient id="bg" x1="0" x2="1"><stop offset="0" stop-color="#5b7fa8"/><stop offset=".45" stop-color="#d9e6f3"/><stop offset="1" stop-color="#3f628c"/></linearGradient></defs>
<g stroke="#3a5578" stroke-width=".7"><rect x="751" y="93" width="7" height="6" rx="1.5" fill="url(#bg)"/><rect x="762" y="93" width="7" height="6" rx="1.5" fill="url(#bg)"/><rect x="749.5" y="98" width="9.5" height="9" fill="url(#bg)"/><rect x="761" y="98" width="9.5" height="9" fill="url(#bg)"/><rect x="746.5" y="104" width="12.5" height="11.5" rx="2" fill="url(#bg)"/><rect x="761" y="104" width="12.5" height="11.5" rx="2" fill="url(#bg)"/><rect x="758.5" y="100" width="3" height="6" fill="#7a8fa8"/></g><rect x="747.5" y="112" width="10.5" height="2.5" fill="#2f7a5a" opacity=".7"/><rect x="762" y="112" width="10.5" height="2.5" fill="#2f7a5a" opacity=".7"/>
<rect x="62.5" y="91.5" width="23" height="24" rx="1.5" fill="#f6b95a" stroke="#d9923a" stroke-width="1"/><rect x="64.5" y="93.5" width="19" height="20" fill="none" stroke="#fbd890" stroke-dasharray="1 1.5"/><path d="M68 93.5 h12 v-2 h-3.5 c0-3 -5-3 -5 0 h-3.5z" fill="#e6e9ee" stroke="#7d8796" stroke-width=".8"/><circle cx="74" cy="90.3" r="1" fill="#8a3a4a"/>
<path d="M70.5 100.5 h12 l5 5 v13 h-17z" fill="#fff" stroke="#4a78b8" stroke-width="1"/><path d="M82.5 100.5 v5 h5" fill="#e8eef6" stroke="#4a78b8" stroke-width=".8"/><path d="M73 104.5 h7 M73 107 h11 M73 109.5 h11 M73 112 h11 M73 114.5 h11" stroke="#c5ccd6" stroke-width="1"/>
<path d="M108 90.5 l4.5 9 M115 90.5 l-4.5 9" stroke="#5a6470" stroke-width="1.6" fill="none"/><circle cx="109" cy="101.3" r="2.2" fill="none" stroke="#2f6fd0" stroke-width="1.6"/><circle cx="114.3" cy="101.3" r="2.2" fill="none" stroke="#2f6fd0" stroke-width="1.6"/>
<path d="M104.5 112.500 h6 l3 3 v7 h-9z" fill="#fff" stroke="#5a7a9a"/><path d="M106 116.5 h5 M106 118.5 h5 M106 120.5 h4" stroke="#5a9ae0" stroke-width=".9"/><path d="M110.500 115.500 h5.500 l3 3 v6 h-8.500z" fill="#fff" stroke="#2f5fa8"/><path d="M112 119.500 h5 M112 121.500 h5" stroke="#3f7fd0" stroke-width=".9"/>
<path d="M123.6 117.0 h6 l-3 3.5z" fill="#6e6e6e"/>
<path d="M104.500 139.500 l7-3 4 6.500 -6.500 4.500z" fill="#f2c36a" stroke="#b87a2a" stroke-width=".8"/><path d="M111.500 136.500 l2.500-1.200 4 6.500 -2.500 1.300z" fill="#d8dde5" stroke="#6a7480" stroke-width=".7"/><path d="M115 137 l4.500-2.500 1 1.800 -4.500 2.700z" fill="#4a6a9a" stroke="#2f4a78" stroke-width=".5"/>
</svg>
<div class="abs" id="grid" style="left:40px;top:199px;width:800px;height:468px;background:#fff;overflow:hidden"><div class="abs" style="left:-40px;top:-199px;width:896px;height:745px">
<div class="abs" style="left:40px;top:199px;width:800px;height:19px;background:linear-gradient(180deg,#e4e7ee 0,#dfe3ea 50%,#dadfe7 100%)"></div>
<div class="abs" style="left:40px;top:218px;width:800px;height:1px;background:#9ea7b3"></div>
<div class="abs" style="left:40px;top:219px;width:25px;height:448px;background:#e0e4ea"></div>
<div class="abs" style="left:65px;top:199px;width:1px;height:468px;background:#a4abb6"></div>
<svg class="abs" style="left:40px;top:199px" width="25" height="19"><path d="M21 5 L21 16 L10 16 Z" fill="#b9bec6"/></svg>
<div class="abs" style="left:226px;top:199px;width:1px;height:19px;background:#a4abb6"></div>
<div class="abs" style="left:387px;top:199px;width:1px;height:19px;background:#a4abb6"></div>
<div class="abs" style="left:579px;top:199px;width:1px;height:19px;background:#a4abb6"></div>
<div class="abs" style="left:740px;top:199px;width:1px;height:19px;background:#a4abb6"></div>
<div class="abs" style="left:226px;top:219px;width:1px;height:128px;background:#d4d8df"></div>
<div class="abs" style="left:387px;top:219px;width:1px;height:128px;background:#d4d8df"></div>
<div class="abs" style="left:579px;top:219px;width:1px;height:128px;background:#d4d8df"></div>
<div class="abs" style="left:740px;top:219px;width:1px;height:128px;background:#d4d8df"></div>
<div class="abs" style="left:66px;top:238px;width:774px;height:1px;background:#d4d8df"></div>
<div class="abs" style="left:66px;top:263px;width:774px;height:1px;background:#d4d8df"></div>
<div class="abs" style="left:66px;top:284px;width:774px;height:1px;background:#d4d8df"></div>
<div class="abs" style="left:66px;top:305px;width:774px;height:1px;background:#d4d8df"></div>
<div class="abs" style="left:66px;top:326px;width:774px;height:1px;background:#d4d8df"></div>
<div class="abs" style="left:66px;top:346px;width:774px;height:1px;background:#d4d8df"></div>
<div class="abs" style="left:40px;top:238px;width:25px;height:1px;background:#a9b0ba"></div>
<div class="abs" style="left:40px;top:263px;width:25px;height:1px;background:#a9b0ba"></div>
<div class="abs" style="left:40px;top:284px;width:25px;height:1px;background:#a9b0ba"></div>
<div class="abs" style="left:40px;top:305px;width:25px;height:1px;background:#a9b0ba"></div>
<div class="abs" style="left:40px;top:326px;width:25px;height:1px;background:#a9b0ba"></div>
<div class="abs" style="left:40px;top:346px;width:25px;height:1px;background:#a9b0ba"></div>
<div class="abs" style="left:40px;top:366px;width:25px;height:1px;background:#a9b0ba"></div>
<div class="abs" style="left:40px;top:386px;width:25px;height:1px;background:#a9b0ba"></div>
<div class="abs" style="left:40px;top:406px;width:25px;height:1px;background:#a9b0ba"></div>
<div class="abs" style="left:40px;top:426px;width:25px;height:1px;background:#a9b0ba"></div>
<div class="abs" style="left:40px;top:446px;width:25px;height:1px;background:#a9b0ba"></div>
<div class="abs" style="left:40px;top:466px;width:25px;height:1px;background:#a9b0ba"></div>
<div class="abs" style="left:40px;top:486px;width:25px;height:1px;background:#a9b0ba"></div>
<div class="abs" style="left:40px;top:506px;width:25px;height:1px;background:#a9b0ba"></div>
<div class="abs" style="left:40px;top:526px;width:25px;height:1px;background:#a9b0ba"></div>
<div class="abs" style="left:40px;top:546px;width:25px;height:1px;background:#a9b0ba"></div>
<div class="abs" style="left:40px;top:566px;width:25px;height:1px;background:#a9b0ba"></div>
<div class="abs" style="left:40px;top:586px;width:25px;height:1px;background:#a9b0ba"></div>
<div class="abs" style="left:40px;top:606px;width:25px;height:1px;background:#a9b0ba"></div>
<div class="abs" style="left:40px;top:626px;width:25px;height:1px;background:#a9b0ba"></div>
<div class="abs" style="left:40px;top:646px;width:25px;height:1px;background:#a9b0ba"></div>
<div class="abs" style="left:40px;top:666px;width:25px;height:1px;background:#a9b0ba"></div>
<div class="abs" style="left:66px;top:239px;width:774px;height:24px;background:#fff"></div>
<div class="abs" style="left:66px;top:264px;width:774px;height:20px;background:#fff"></div>
<div class="abs" style="left:226px;top:199px;width:162px;height:20px;background:linear-gradient(180deg,#f9d978 0,#ffdc6b 45%,#ffd75e 100%);border:1px solid #f0963a;border-top-color:#f3b45f"></div>
<div class="abs" style="left:40px;top:284px;width:26px;height:22px;background:#ffd966;border:1px solid #f0963a;border-left:none"></div>
<div class="abs" style="left:66px;top:347px;width:774px;height:19px;background:#5f497a"></div>
<div class="abs" style="left:66px;top:367px;width:160px;height:300px;background:#92d050"></div>
<div class="abs" style="left:226px;top:347px;width:1px;height:320px;background:#000"></div>
<div class="abs" style="left:387px;top:347px;width:1px;height:320px;background:#000"></div>
<div class="abs" style="left:579px;top:347px;width:1px;height:320px;background:#000"></div>
<div class="abs" style="left:740px;top:347px;width:1px;height:320px;background:#000"></div>
<div class="abs" style="left:66px;top:366px;width:774px;height:1px;background:#000"></div>
<div class="abs" style="left:66px;top:386px;width:774px;height:1px;background:#000"></div>
<div class="abs" style="left:66px;top:406px;width:774px;height:1px;background:#000"></div>
<div class="abs" style="left:66px;top:426px;width:774px;height:1px;background:#000"></div>
<div class="abs" style="left:66px;top:446px;width:774px;height:1px;background:#000"></div>
<div class="abs" style="left:66px;top:466px;width:774px;height:1px;background:#000"></div>
<div class="abs" style="left:66px;top:486px;width:774px;height:1px;background:#000"></div>
<div class="abs" style="left:66px;top:506px;width:774px;height:1px;background:#000"></div>
<div class="abs" style="left:66px;top:526px;width:774px;height:1px;background:#000"></div>
<div class="abs" style="left:66px;top:546px;width:774px;height:1px;background:#000"></div>
<div class="abs" style="left:66px;top:566px;width:774px;height:1px;background:#000"></div>
<div class="abs" style="left:66px;top:586px;width:774px;height:1px;background:#000"></div>
<div class="abs" style="left:66px;top:606px;width:774px;height:1px;background:#000"></div>
<div class="abs" style="left:66px;top:626px;width:774px;height:1px;background:#000"></div>
<div class="abs" style="left:66px;top:646px;width:774px;height:1px;background:#000"></div>
<div class="abs" style="left:66px;top:666px;width:774px;height:1px;background:#000"></div>
<div class="abs" style="left:66px;top:346px;width:774px;height:1px;background:#000"></div>
<svg class="abs" style="left:0;top:0" width="896" height="745" font-family="Liberation Sans"><text x="146" y="213.5" font-size="12.5" font-weight="normal" fill="#27282a" text-anchor="middle">A</text><text x="307" y="213.5" font-size="12.5" font-weight="normal" fill="#27282a" text-anchor="middle">B</text><text x="484" y="213.5" font-size="12.5" font-weight="normal" fill="#27282a" text-anchor="middle">C</text><text x="660.5" y="213.5" font-size="12.5" font-weight="normal" fill="#27282a" text-anchor="middle">D</text><text x="49.2" y="233.5" font-size="12" font-weight="normal" font-style="normal" font-family="Liberation Sans" fill="#27282a" textLength="6.6" lengthAdjust="spacingAndGlyphs">1</text><text x="49.2" y="258.5" font-size="12" font-weight="normal" font-style="normal" font-family="Liberation Sans" fill="#27282a" textLength="6.6" lengthAdjust="spacingAndGlyphs">2</text><text x="49.2" y="279.5" font-size="12" font-weight="normal" font-style="normal" font-family="Liberation Sans" fill="#27282a" textLength="6.6" lengthAdjust="spacingAndGlyphs">3</text><text x="49.2" y="300.5" font-size="12" font-weight="normal" font-style="normal" font-family="Liberation Sans" fill="#27282a" textLength="6.6" lengthAdjust="spacingAndGlyphs">4</text><text x="49.2" y="321.5" font-size="12" font-weight="normal" font-style="normal" font-family="Liberation Sans" fill="#27282a" textLength="6.6" lengthAdjust="spacingAndGlyphs">5</text><text x="49.2" y="341.5" font-size="12" font-weight="normal" font-style="normal" font-family="Liberation Sans" fill="#27282a" textLength="6.6" lengthAdjust="spacingAndGlyphs">6</text><text x="49.2" y="361.5" font-size="12" font-weight="normal" font-style="normal" font-family="Liberation Sans" fill="#27282a" textLength="6.6" lengthAdjust="spacingAndGlyphs">7</text><text x="49.2" y="381.5" font-size="12" font-weight="normal" font-style="normal" font-family="Liberation Sans" fill="#27282a" textLength="6.6" lengthAdjust="spacingAndGlyphs">8</text><text x="49.2" y="401.5" font-size="12" font-weight="normal" font-style="normal" font-family="Liberation Sans" fill="#27282a" textLength="6.6" lengthAdjust="spacingAndGlyphs">9</text><text x="46.6" y="421.5" font-size="12" font-weight="normal" font-style="normal" font-family="Liberation Sans" fill="#27282a" textLength="13.0" lengthAdjust="spacingAndGlyphs">10</text><text x="46.6" y="441.5" font-size="12" font-weight="normal" font-style="normal" font-family="Liberation Sans" fill="#27282a" textLength="13.0" lengthAdjust="spacingAndGlyphs">11</text><text x="46.6" y="461.5" font-size="12" font-weight="normal" font-style="normal" font-family="Liberation Sans" fill="#27282a" textLength="13.0" lengthAdjust="spacingAndGlyphs">12</text><text x="46.6" y="481.5" font-size="12" font-weight="normal" font-style="normal" font-family="Liberation Sans" fill="#27282a" textLength="13.0" lengthAdjust="spacingAndGlyphs">13</text><text x="46.6" y="501.5" font-size="12" font-weight="normal" font-style="normal" font-family="Liberation Sans" fill="#27282a" textLength="13.0" lengthAdjust="spacingAndGlyphs">14</text><text x="46.6" y="521.5" font-size="12" font-weight="normal" font-style="normal" font-family="Liberation Sans" fill="#27282a" textLength="13.0" lengthAdjust="spacingAndGlyphs">15</text><text x="46.6" y="541.5" font-size="12" font-weight="normal" font-style="normal" font-family="Liberation Sans" fill="#27282a" textLength="13.0" lengthAdjust="spacingAndGlyphs">16</text><text x="46.6" y="561.5" font-size="12" font-weight="normal" font-style="normal" font-family="Liberation Sans" fill="#27282a" textLength="13.0" lengthAdjust="spacingAndGlyphs">17</text><text x="46.6" y="581.5" font-size="12" font-weight="normal" font-style="normal" font-family="Liberation Sans" fill="#27282a" textLength="13.0" lengthAdjust="spacingAndGlyphs">18</text><text x="46.6" y="601.5" font-size="12" font-weight="normal" font-style="normal" font-family="Liberation Sans" fill="#27282a" textLength="13.0" lengthAdjust="spacingAndGlyphs">19</text><text x="46.6" y="621.5" font-size="12" font-weight="normal" font-style="normal" font-family="Liberation Sans" fill="#27282a" textLength="13.0" lengthAdjust="spacingAndGlyphs">20</text><text x="46.6" y="641.5" font-size="12" font-weight="normal" font-style="normal" font-family="Liberation Sans" fill="#27282a" textLength="13.0" lengthAdjust="spacingAndGlyphs">21</text><text x="46.6" y="661.5" font-size="12" font-weight="normal" font-style="normal" font-family="Liberation Sans" fill="#27282a" textLength="13.0" lengthAdjust="spacingAndGlyphs">22</text><text x="356.3" y="258.2" font-size="17" font-weight="bold" font-style="normal" font-family="Liberation Sans" fill="#000" textLength="310.1" lengthAdjust="spacingAndGlyphs">Таблица заработной платы персонала</text><text x="472.0" y="279.8" font-size="13.5" font-weight="bold" font-style="normal" font-family="Liberation Sans" fill="#000" textLength="79.0" lengthAdjust="spacingAndGlyphs">за 2016 год</text><text x="132.5" y="362.0" font-size="13.5" font-weight="bold" font-style="normal" font-family="Liberation Sans" fill="#fff" textLength="27.5" lengthAdjust="spacingAndGlyphs">Имя</text><text x="295.5" y="362.0" font-size="13.5" font-weight="bold" font-style="normal" font-family="Liberation Sans" fill="#fff" textLength="24.0" lengthAdjust="spacingAndGlyphs">Пол</text><text x="417.0" y="362.0" font-size="13.5" font-weight="bold" font-style="normal" font-family="Liberation Sans" fill="#fff" textLength="134.3" lengthAdjust="spacingAndGlyphs">Категория персонала</text><text x="645.5" y="362.0" font-size="13.5" font-weight="bold" font-style="normal" font-family="Liberation Sans" fill="#fff" textLength="29.0" lengthAdjust="spacingAndGlyphs">Дата</text><text x="750.3" y="362.0" font-size="13.5" font-weight="bold" font-style="normal" font-family="Liberation Sans" fill="#fff" textLength="91.2" lengthAdjust="spacingAndGlyphs">Сумма зарабо</text><text x="68.8" y="382.0" font-size="13.5" font-weight="normal" font-style="normal" font-family="Liberation Sans" fill="#000" textLength="93.2" lengthAdjust="spacingAndGlyphs">Николаев А. Д.</text><text x="292.5" y="382.0" font-size="13.5" font-weight="normal" font-style="normal" font-family="Liberation Sans" fill="#000" textLength="30.0" lengthAdjust="spacingAndGlyphs">муж.</text><text x="420.8" y="382.0" font-size="13.5" font-weight="normal" font-style="normal" font-family="Liberation Sans" fill="#000" textLength="125.5" lengthAdjust="spacingAndGlyphs">Основной персонал</text><text x="628.0" y="382.0" font-size="13.5" font-weight="normal" font-style="normal" font-family="Liberation Sans" fill="#000" textLength="64.0" lengthAdjust="spacingAndGlyphs">25.05.2016</text><text x="832.3" y="382.0" font-size="13.5" font-weight="normal" font-style="normal" font-family="Liberation Sans" fill="#000" textLength="41.5" lengthAdjust="spacingAndGlyphs">21 556</text><text x="68.8" y="402.0" font-size="13.5" font-weight="normal" font-style="normal" font-family="Liberation Sans" fill="#000" textLength="102.5" lengthAdjust="spacingAndGlyphs">Сафронова В. М.</text><text x="292.0" y="402.0" font-size="13.5" font-weight="normal" font-style="normal" font-family="Liberation Sans" fill="#000" textLength="29.3" lengthAdjust="spacingAndGlyphs">жен.</text><text x="420.8" y="402.0" font-size="13.5" font-weight="normal" font-style="normal" font-family="Liberation Sans" fill="#000" textLength="125.5" lengthAdjust="spacingAndGlyphs">Основной персонал</text><text x="628.0" y="402.0" font-size="13.5" font-weight="normal" font-style="normal" font-family="Liberation Sans" fill="#000" textLength="64.0" lengthAdjust="spacingAndGlyphs">25.05.2016</text><text x="832.3" y="402.0" font-size="13.5" font-weight="normal" font-style="normal" font-family="Liberation Sans" fill="#000" textLength="41.5" lengthAdjust="spacingAndGlyphs">15 763</text><text x="68.8" y="422.0" font-size="13.5" font-weight="normal" font-style="normal" font-family="Liberation Sans" fill="#000" textLength="75.0" lengthAdjust="spacingAndGlyphs">Коваль Л. П.</text><text x="292.0" y="422.0" font-size="13.5" font-weight="normal" font-style="normal" font-family="Liberation Sans" fill="#000" textLength="29.3" lengthAdjust="spacingAndGlyphs">жен.</text><text x="395.0" y="422.0" font-size="13.5" font-weight="normal" font-style="normal" font-family="Liberation Sans" fill="#000" textLength="177.5" lengthAdjust="spacingAndGlyphs">Вспомогательный персонал</text><text x="628.0" y="422.0" font-size="13.5" font-weight="normal" font-style="normal" font-family="Liberation Sans" fill="#000" textLength="64.0" lengthAdjust="spacingAndGlyphs">25.05.2016</text><text x="832.3" y="422.0" font-size="13.5" font-weight="normal" font-style="normal" font-family="Liberation Sans" fill="#000" textLength="41.5" lengthAdjust="spacingAndGlyphs">10 543</text><text x="68.8" y="442.0" font-size="13.5" font-weight="normal" font-style="normal" font-family="Liberation Sans" fill="#000" textLength="96.2" lengthAdjust="spacingAndGlyphs">Парфенов Д. Ф.</text><text x="292.5" y="442.0" font-size="13.5" font-weight="normal" font-style="normal" font-family="Liberation Sans" fill="#000" textLength="30.0" lengthAdjust="spacingAndGlyphs">муж.</text><text x="420.8" y="442.0" font-size="13.5" font-weight="normal" font-style="normal" font-family="Liberation Sans" fill="#000" textLength="125.5" lengthAdjust="spacingAndGlyphs">Основной персонал</text><text x="628.0" y="442.0" font-size="13.5" font-weight="normal" font-style="normal" font-family="Liberation Sans" fill="#000" textLength="64.0" lengthAdjust="spacingAndGlyphs">25.05.2016</text><text x="832.3" y="442.0" font-size="13.5" font-weight="normal" font-style="normal" font-family="Liberation Sans" fill="#000" textLength="41.5" lengthAdjust="spacingAndGlyphs">35 254</text><text x="68.8" y="462.0" font-size="13.5" font-weight="normal" font-style="normal" font-family="Liberation Sans" fill="#000" textLength="77.5" lengthAdjust="spacingAndGlyphs">Петров Ф. Л.</text><text x="292.5" y="462.0" font-size="13.5" font-weight="normal" font-style="normal" font-family="Liberation Sans" fill="#000" textLength="30.0" lengthAdjust="spacingAndGlyphs">муж.</text><text x="420.8" y="462.0" font-size="13.5" font-weight="normal" font-style="normal" font-family="Liberation Sans" fill="#000" textLength="125.5" lengthAdjust="spacingAndGlyphs">Основной персонал</text><text x="628.0" y="462.0" font-size="13.5" font-weight="normal" font-style="normal" font-family="Liberation Sans" fill="#000" textLength="64.0" lengthAdjust="spacingAndGlyphs">25.05.2016</text><text x="832.3" y="462.0" font-size="13.5" font-weight="normal" font-style="normal" font-family="Liberation Sans" fill="#000" textLength="41.5" lengthAdjust="spacingAndGlyphs">11 456</text><text x="68.8" y="482.0" font-size="13.5" font-weight="normal" font-style="normal" font-family="Liberation Sans" fill="#000" textLength="81.2" lengthAdjust="spacingAndGlyphs">Попова М. Д.</text><text x="292.0" y="482.0" font-size="13.5" font-weight="normal" font-style="normal" font-family="Liberation Sans" fill="#000" textLength="29.3" lengthAdjust="spacingAndGlyphs">жен.</text><text x="395.0" y="482.0" font-size="13.5" font-weight="normal" font-style="normal" font-family="Liberation Sans" fill="#000" textLength="177.5" lengthAdjust="spacingAndGlyphs">Вспомогательный персонал</text><text x="628.0" y="482.0" font-size="13.5" font-weight="normal" font-style="normal" font-family="Liberation Sans" fill="#000" textLength="64.0" lengthAdjust="spacingAndGlyphs">25.05.2016</text><text x="836.3" y="482.0" font-size="13.5" font-weight="normal" font-style="normal" font-family="Liberation Sans" fill="#000" textLength="34.5" lengthAdjust="spacingAndGlyphs">9 564</text><text x="68.8" y="502.0" font-size="13.5" font-weight="normal" font-style="normal" font-family="Liberation Sans" fill="#000" textLength="93.2" lengthAdjust="spacingAndGlyphs">Николаев А. Д.</text><text x="292.5" y="502.0" font-size="13.5" font-weight="normal" font-style="normal" font-family="Liberation Sans" fill="#000" textLength="30.0" lengthAdjust="spacingAndGlyphs">муж.</text><text x="420.8" y="502.0" font-size="13.5" font-weight="normal" font-style="normal" font-family="Liberation Sans" fill="#000" textLength="125.5" lengthAdjust="spacingAndGlyphs">Основной персонал</text><text x="628.0" y="502.0" font-size="13.5" font-weight="normal" font-style="normal" font-family="Liberation Sans" fill="#000" textLength="64.0" lengthAdjust="spacingAndGlyphs">23.06.2016</text><text x="832.3" y="502.0" font-size="13.5" font-weight="normal" font-style="normal" font-family="Liberation Sans" fill="#000" textLength="41.5" lengthAdjust="spacingAndGlyphs">21 556</text><text x="68.8" y="522.0" font-size="13.5" font-weight="normal" font-style="normal" font-family="Liberation Sans" fill="#000" textLength="102.5" lengthAdjust="spacingAndGlyphs">Сафронова В. М.</text><text x="292.0" y="522.0" font-size="13.5" font-weight="normal" font-style="normal" font-family="Liberation Sans" fill="#000" textLength="29.3" lengthAdjust="spacingAndGlyphs">жен.</text><text x="420.8" y="522.0" font-size="13.5" font-weight="normal" font-style="normal" font-family="Liberation Sans" fill="#000" textLength="125.5" lengthAdjust="spacingAndGlyphs">Основной персонал</text><text x="628.0" y="522.0" font-size="13.5" font-weight="normal" font-style="normal" font-family="Liberation Sans" fill="#000" textLength="64.0" lengthAdjust="spacingAndGlyphs">23.06.2016</text><text x="832.3" y="522.0" font-size="13.5" font-weight="normal" font-style="normal" font-family="Liberation Sans" fill="#000" textLength="41.5" lengthAdjust="spacingAndGlyphs">15 763</text><text x="68.8" y="542.0" font-size="13.5" font-weight="normal" font-style="normal" font-family="Liberation Sans" fill="#000" textLength="75.0" lengthAdjust="spacingAndGlyphs">Коваль Л. П.</text><text x="292.0" y="542.0" font-size="13.5" font-weight="normal" font-style="normal" font-family="Liberation Sans" fill="#000" textLength="29.3" lengthAdjust="spacingAndGlyphs">жен.</text><text x="395.0" y="542.0" font-size="13.5" font-weight="normal" font-style="normal" font-family="Liberation Sans" fill="#000" textLength="177.5" lengthAdjust="spacingAndGlyphs">Вспомогательный персонал</text><text x="628.0" y="542.0" font-size="13.5" font-weight="normal" font-style="normal" font-family="Liberation Sans" fill="#000" textLength="64.0" lengthAdjust="spacingAndGlyphs">23.06.2016</text><text x="832.3" y="542.0" font-size="13.5" font-weight="normal" font-style="normal" font-family="Liberation Sans" fill="#000" textLength="41.5" lengthAdjust="spacingAndGlyphs">11 543</text><text x="68.8" y="562.0" font-size="13.5" font-weight="normal" font-style="normal" font-family="Liberation Sans" fill="#000" textLength="96.2" lengthAdjust="spacingAndGlyphs">Парфенов Д. Ф.</text><text x="292.5" y="562.0" font-size="13.5" font-weight="normal" font-style="normal" font-family="Liberation Sans" fill="#000" textLength="30.0" lengthAdjust="spacingAndGlyphs">муж.</text><text x="420.8" y="562.0" font-size="13.5" font-weight="normal" font-style="normal" font-family="Liberation Sans" fill="#000" textLength="125.5" lengthAdjust="spacingAndGlyphs">Основной персонал</text><text x="628.0" y="562.0" font-size="13.5" font-weight="normal" font-style="normal" font-family="Liberation Sans" fill="#000" textLength="64.0" lengthAdjust="spacingAndGlyphs">23.06.2016</text><text x="832.3" y="562.0" font-size="13.5" font-weight="normal" font-style="normal" font-family="Liberation Sans" fill="#000" textLength="41.5" lengthAdjust="spacingAndGlyphs">35 254</text><text x="68.8" y="582.0" font-size="13.5" font-weight="normal" font-style="normal" font-family="Liberation Sans" fill="#000" textLength="77.5" lengthAdjust="spacingAndGlyphs">Петров Ф. Л.</text><text x="292.5" y="582.0" font-size="13.5" font-weight="normal" font-style="normal" font-family="Liberation Sans" fill="#000" textLength="30.0" lengthAdjust="spacingAndGlyphs">муж.</text><text x="420.8" y="582.0" font-size="13.5" font-weight="normal" font-style="normal" font-family="Liberation Sans" fill="#000" textLength="125.5" lengthAdjust="spacingAndGlyphs">Основной персонал</text><text x="628.0" y="582.0" font-size="13.5" font-weight="normal" font-style="normal" font-family="Liberation Sans" fill="#000" textLength="64.0" lengthAdjust="spacingAndGlyphs">23.06.2016</text><text x="832.3" y="582.0" font-size="13.5" font-weight="normal" font-style="normal" font-family="Liberation Sans" fill="#000" textLength="41.5" lengthAdjust="spacingAndGlyphs">11 456</text><text x="68.8" y="602.0" font-size="13.5" font-weight="normal" font-style="normal" font-family="Liberation Sans" fill="#000" textLength="81.2" lengthAdjust="spacingAndGlyphs">Попова М. Д.</text><text x="292.0" y="602.0" font-size="13.5" font-weight="normal" font-style="normal" font-family="Liberation Sans" fill="#000" textLength="29.3" lengthAdjust="spacingAndGlyphs">жен.</text><text x="395.0" y="602.0" font-size="13.5" font-weight="normal" font-style="normal" font-family="Liberation Sans" fill="#000" textLength="177.5" lengthAdjust="spacingAndGlyphs">Вспомогательный персонал</text><text x="628.0" y="602.0" font-size="13.5" font-weight="normal" font-style="normal" font-family="Liberation Sans" fill="#000" textLength="64.0" lengthAdjust="spacingAndGlyphs">23.06.2016</text><text x="836.3" y="602.0" font-size="13.5" font-weight="normal" font-style="normal" font-family="Liberation Sans" fill="#000" textLength="34.5" lengthAdjust="spacingAndGlyphs">9 564</text><text x="68.8" y="622.0" font-size="13.5" font-weight="normal" font-style="normal" font-family="Liberation Sans" fill="#000" textLength="93.2" lengthAdjust="spacingAndGlyphs">Николаев А. Д.</text><text x="292.5" y="622.0" font-size="13.5" font-weight="normal" font-style="normal" font-family="Liberation Sans" fill="#000" textLength="30.0" lengthAdjust="spacingAndGlyphs">муж.</text><text x="420.8" y="622.0" font-size="13.5" font-weight="normal" font-style="normal" font-family="Liberation Sans" fill="#000" textLength="125.5" lengthAdjust="spacingAndGlyphs">Основной персонал</text><text x="628.0" y="622.0" font-size="13.5" font-weight="normal" font-style="normal" font-family="Liberation Sans" fill="#000" textLength="64.0" lengthAdjust="spacingAndGlyphs">25.07.2016</text><text x="832.3" y="622.0" font-size="13.5" font-weight="normal" font-style="normal" font-family="Liberation Sans" fill="#000" textLength="41.5" lengthAdjust="spacingAndGlyphs">21 556</text><text x="68.8" y="642.0" font-size="13.5" font-weight="normal" font-style="normal" font-family="Liberation Sans" fill="#000" textLength="102.5" lengthAdjust="spacingAndGlyphs">Сафронова В. М.</text><text x="292.0" y="642.0" font-size="13.5" font-weight="normal" font-style="normal" font-family="Liberation Sans" fill="#000" textLength="29.3" lengthAdjust="spacingAndGlyphs">жен.</text><text x="420.8" y="642.0" font-size="13.5" font-weight="normal" font-style="normal" font-family="Liberation Sans" fill="#000" textLength="125.5" lengthAdjust="spacingAndGlyphs">Основной персонал</text><text x="628.0" y="642.0" font-size="13.5" font-weight="normal" font-style="normal" font-family="Liberation Sans" fill="#000" textLength="64.0" lengthAdjust="spacingAndGlyphs">25.07.2016</text><text x="832.3" y="642.0" font-size="13.5" font-weight="normal" font-style="normal" font-family="Liberation Sans" fill="#000" textLength="41.5" lengthAdjust="spacingAndGlyphs">17 763</text><text x="68.8" y="662.0" font-size="13.5" font-weight="normal" font-style="normal" font-family="Liberation Sans" fill="#000" textLength="75.0" lengthAdjust="spacingAndGlyphs">Коваль Л. П.</text><text x="292.0" y="662.0" font-size="13.5" font-weight="normal" font-style="normal" font-family="Liberation Sans" fill="#000" textLength="29.3" lengthAdjust="spacingAndGlyphs">жен.</text><text x="395.0" y="662.0" font-size="13.5" font-weight="normal" font-style="normal" font-family="Liberation Sans" fill="#000" textLength="177.5" lengthAdjust="spacingAndGlyphs">Вспомогательный персонал</text><text x="628.0" y="662.0" font-size="13.5" font-weight="normal" font-style="normal" font-family="Liberation Sans" fill="#000" textLength="64.0" lengthAdjust="spacingAndGlyphs">25.07.2016</text><text x="832.3" y="662.0" font-size="13.5" font-weight="normal" font-style="normal" font-family="Liberation Sans" fill="#000" textLength="41.5" lengthAdjust="spacingAndGlyphs">11 543</text></svg>
<div class="abs" style="left:225px;top:283px;width:164px;height:24px;border:3px solid #000"></div>
<div class="abs" style="left:384px;top:302px;width:6px;height:6px;background:#000;border:1px solid #fff;border-right:none;border-bottom:none"></div>
</div></div>
<div class="abs" style="left:34px;top:84px;width:4px;height:626px;background:linear-gradient(180deg,#d3e2f4 0,#c9dcf0 90px,#c6daf0 150px,#aecaea 170px,#a9c7e9 100%)"></div>
<div class="abs" style="left:858px;top:84px;width:4px;height:626px;background:linear-gradient(180deg,#d3e2f4 0,#c9dcf0 90px,#c6daf0 150px,#aecaea 170px,#a9c7e9 100%)"></div>
<div class="abs" style="left:34px;top:706px;width:828px;height:5px;background:linear-gradient(180deg,#eef4fb 0,#b9d2ed 1.500px,#b4cfec 100%)"></div>
<div class="abs" style="left:39px;top:84px;width:1px;height:622px;background:#8d98a8"></div>
<div class="abs" style="left:856px;top:84px;width:1px;height:622px;background:#8d98a8"></div>
<div class="abs" style="left:39px;top:705px;width:818px;height:1px;background:#8d98a8"></div>
<div class="abs" style="left:38px;top:84px;width:1px;height:622px;background:rgba(255,255,255,.55)"></div>
<div class="abs" style="left:857px;top:84px;width:1px;height:622px;background:rgba(255,255,255,.35)"></div>
<div class="abs" style="left:40px;top:170px;width:816px;height:3px;background:linear-gradient(180deg,#c3cad5 0,#d9dee6 100%)"></div>
<div class="abs" style="left:40px;top:173px;width:816px;height:1px;background:#8f99a8"></div>
<div class="abs" style="left:40px;top:174px;width:816px;height:20px;background:#fff"></div>
<div class="abs" style="left:40px;top:194px;width:816px;height:1px;background:#939dab"></div>
<div class="abs" style="left:40px;top:195px;width:816px;height:4px;background:linear-gradient(180deg,#eef1f6 0,#f6f3f5 55%,#b9a4aa 100%)"></div>
<div class="abs" style="left:201px;top:174px;width:85px;height:20px;background:#dfe3ec;border:1px solid #aab2bf;border-right:1px solid #c5ccd6;border-radius:10px 0 0 10px"></div>
<div class="abs" style="left:207px;top:179px;width:8px;height:8px;border-radius:50%;background:radial-gradient(circle at 40% 35%,#f4f6f9 0,#c9cfd9 70%,#b4bbc7 100%)"></div>
<div class="abs" style="left:840px;top:174px;width:16px;height:20px;background:#e0e4ec;border-left:1px solid #b9c1cd"></div>
<div class="abs" style="left:840px;top:199px;width:16px;height:468px;background:#e6e9ef;border-left:1px solid #d5dae2"></div>
<div class="abs" style="left:841px;top:199px;width:15px;height:7px;background:#fff;border:1px solid #8b6f78"></div>
<div class="abs" style="left:845px;top:202px;width:7px;height:1px;background:#777"></div>
<div class="abs" style="left:841px;top:224px;width:14px;height:50px;background:linear-gradient(90deg,#f1f3f7 0,#e4e8ef 50%,#d3d9e3 100%);border:1px solid #9aa3b1;border-radius:2px"></div>
<div class="abs" style="left:844px;top:247px;width:8px;height:7px;background:repeating-linear-gradient(180deg,#8c7a86 0,#8c7a86 1px,transparent 1px,transparent 3px)"></div>
<div class="abs" style="left:40px;top:667px;width:816px;height:17px;background:#e9ecf2"></div>
<div class="abs" style="left:40px;top:667px;width:62px;height:17px;background:#e4e8ef;border-right:1px solid #c5ccd6"></div>
<div class="abs" style="left:40px;top:681px;width:816px;height:1px;background:#f4f6f9"></div>
<div class="abs" style="left:40px;top:682px;width:816px;height:2px;background:linear-gradient(180deg,#b7bdc8,#8f97a4)"></div>
<div class="abs" style="left:528px;top:667px;width:312px;height:16px;background:#e7eaf0"></div>
<div class="abs" style="left:546px;top:667px;width:201px;height:16px;background:linear-gradient(180deg,#f3f5f8 0,#e6e9ef 50%,#d8dde6 100%);border:1px solid #a4acb8;border-top:none;border-radius:0 0 2px 2px"></div>
<div class="abs" style="left:642px;top:671px;width:8px;height:8px;background:repeating-linear-gradient(90deg,#8c8f9a 0,#8c8f9a 1px,transparent 1px,transparent 2px)"></div>
<div class="abs" style="left:520px;top:668px;width:8px;height:15px;background:#fff;border:1px solid #8b6f78"></div><div class="abs" style="left:524px;top:671px;width:1px;height:9px;background:#555"></div>
<div class="abs" style="left:832px;top:668px;width:8px;height:15px;background:#fff;border:1px solid #8b6f78"></div><div class="abs" style="left:836px;top:671px;width:1px;height:9px;background:#555"></div>
<div class="abs" style="left:40px;top:684px;width:816px;height:21px;background:linear-gradient(180deg,#fafbfc 0,#fafbfc 1px,#e2e5eb 1px,#d9dde4 45%,#cbd0d9 55%,#bfc4cd 100%)"></div>
<div class="abs" style="left:94px;top:686px;width:2px;height:18px;background:linear-gradient(90deg,#a99ea6 0,#a99ea6 50%,#f4f6f9 50%)"></div>
<div class="abs" style="left:129px;top:686px;width:2px;height:18px;background:linear-gradient(90deg,#a99ea6 0,#a99ea6 50%,#f4f6f9 50%)"></div>
<div class="abs" style="left:599px;top:686px;width:2px;height:18px;background:linear-gradient(90deg,#a99ea6 0,#a99ea6 50%,#f4f6f9 50%)"></div>
<div class="abs" style="left:604px;top:685px;width:19px;height:19px;background:linear-gradient(180deg,#fbd784,#ffe59a);border:1px solid #e8a94e;border-radius:3px"></div>
<svg class="abs" style="left:0;top:0" width="896" height="745" font-family="Liberation Sans">
<text x="104.8" y="189.0" font-size="11" font-weight="normal" font-style="normal" font-family="Liberation Sans" fill="#111" textLength="14.0" lengthAdjust="spacingAndGlyphs">B4</text>
<path d="M188 183.500 h7.500 l-3.750 4z" fill="#2b2b2b"/>
<text x="267" y="189" font-size="13" font-weight="bold" font-style="italic" font-family="Liberation Serif" fill="#333" textLength="12" lengthAdjust="spacingAndGlyphs">fx</text>
<path d="M844.500 181.500 l3.500 3.500 3.500-3.500" fill="none" stroke="#4a4f5a" stroke-width="1.800"/>
<path d="M843.500 218 h9 l-4.500-5z" fill="#4d5360"/>
<path d="M843.500 655.500 h9 l-4.500 5z" fill="#4d5360"/>
<path d="M46.500 670.500 v8" stroke="#505765" stroke-width="1.400"/><path d="M52.500 670.500 v8 l-4.500-4z" fill="#505765"/>
<path d="M66.500 670.500 v8 l-4.500-4z" fill="#505765"/>
<path d="M76.500 670.500 v8 l4.500-4z" fill="#505765"/>
<path d="M90 670.500 v8 l4.500-4z" fill="#505765"/><path d="M96 670.500 v8" stroke="#505765" stroke-width="1.400"/>
<path d="M538 670.500 v8 l-5-4z" fill="#4d5360"/><path d="M821 670.500 v8 l5-4z" fill="#4d5360"/>
<defs><linearGradient id="tg" x1="0" x2="1"><stop offset="0" stop-color="#f3f5f8"/><stop offset=".55" stop-color="#e9ecf1"/><stop offset="1" stop-color="#d9dde5"/></linearGradient></defs>
<clipPath id="tc"><rect x="102" y="667" width="418.500" height="15"/></clipPath><g clip-path="url(#tc)">
<path d="M109.5 682 L123.0 667.500 H176.5 L162.5 682z" fill="url(#tg)"/><path d="M109.5 682 L123.0 667.500" stroke="#8e98a8" fill="none"/><path d="M106.5 682 h4 l2-2.500 h-3.500z" fill="#aab2bf"/>
<path d="M162.5 682 L176.0 667.500 H230 L216 682z" fill="url(#tg)"/><path d="M162.5 682 L176.0 667.500" stroke="#8e98a8" fill="none"/><path d="M159.5 682 h4 l2-2.500 h-3.500z" fill="#aab2bf"/>
<path d="M216 682 L229.5 667.500 H284 L270 682z" fill="url(#tg)"/><path d="M216 682 L229.5 667.500" stroke="#8e98a8" fill="none"/><path d="M213 682 h4 l2-2.500 h-3.500z" fill="#aab2bf"/>
<path d="M270 682 L283.5 667.500 H345 L331 682z" fill="url(#tg)"/><path d="M270 682 L283.5 667.500" stroke="#8e98a8" fill="none"/><path d="M267 682 h4 l2-2.500 h-3.500z" fill="#aab2bf"/>
<path d="M331 682 L344.5 667.500 H407.5 L393.5 682z" fill="url(#tg)"/><path d="M331 682 L344.5 667.500" stroke="#8e98a8" fill="none"/><path d="M328 682 h4 l2-2.500 h-3.500z" fill="#aab2bf"/>
<path d="M393.5 682 V667 H459 L445 682z" fill="#fff"/><path d="M393.5 682 V667.500" stroke="#8e98a8" fill="none"/><path d="M390.0 682 h3.500 v-3.500z" fill="#a9b1be"/>
<path d="M445 682 L458.5 667.500 H512 L498 682z" fill="url(#tg)"/><path d="M445 682 L458.5 667.500" stroke="#8e98a8" fill="none"/><path d="M442 682 h4 l2-2.500 h-3.500z" fill="#aab2bf"/>
<path d="M498 682 L511.5 667.500 H565 L551 682z" fill="url(#tg)"/><path d="M498 682 L511.5 667.500" stroke="#8e98a8" fill="none"/><path d="M495 682 h4 l2-2.500 h-3.500z" fill="#aab2bf"/>
<text x="123.0" y="680.0" font-size="13" font-weight="normal" font-style="normal" font-family="Liberation Sans" fill="#4a4d68" textLength="33.5" lengthAdjust="spacingAndGlyphs">Лист5</text>
<text x="176.0" y="680.0" font-size="13" font-weight="normal" font-style="normal" font-family="Liberation Sans" fill="#4a4d68" textLength="33.0" lengthAdjust="spacingAndGlyphs">Лист8</text>
<text x="229.0" y="680.0" font-size="13" font-weight="normal" font-style="normal" font-family="Liberation Sans" fill="#4a4d68" textLength="33.0" lengthAdjust="spacingAndGlyphs">Лист9</text>
<text x="283.8" y="680.0" font-size="13" font-weight="normal" font-style="normal" font-family="Liberation Sans" fill="#4a4d68" textLength="39.4" lengthAdjust="spacingAndGlyphs">Лист10</text>
<text x="344.5" y="680.0" font-size="13" font-weight="normal" font-style="normal" font-family="Liberation Sans" fill="#4a4d68" textLength="39.7" lengthAdjust="spacingAndGlyphs">Лист11</text>
<text x="403.8" y="680.0" font-size="13" font-weight="bold" font-style="normal" font-family="Liberation Sans" fill="#2e2e3e" textLength="34.2" lengthAdjust="spacingAndGlyphs">Лист1</text>
<text x="457.0" y="680.0" font-size="13" font-weight="normal" font-style="normal" font-family="Liberation Sans" fill="#4a4d68" textLength="33.0" lengthAdjust="spacingAndGlyphs">Лист2</text>
<text x="510.0" y="680.0" font-size="13" font-weight="normal" font-style="normal" font-family="Liberation Sans" fill="#4a4d68" textLength="33.0" lengthAdjust="spacingAndGlyphs">Лист3</text>
</g>
<text x="48.0" y="698.0" font-size="11" font-weight="normal" font-style="normal" font-family="Liberation Sans" fill="#3a2e30" textLength="36.0" lengthAdjust="spacingAndGlyphs">Готово</text>
<text x="670.0" y="698.0" font-size="11" font-weight="normal" font-style="normal" font-family="Liberation Sans" fill="#3a2e30" textLength="26.8" lengthAdjust="spacingAndGlyphs">100%</text>
<rect x="104.500" y="688.500" width="13" height="11" fill="#fff" stroke="#4a7a9a"/><path d="M104.500 691.500 h13 M104.500 694.500 h13 M104.500 697 h13 M109 688.500 v11 M113.500 688.500 v11" stroke="#9ab5c8" stroke-width=".8"/><rect x="105" y="689" width="12" height="2.500" fill="#6aa5d8"/><circle cx="106" cy="689" r="2.300" fill="#e8632a"/>
<g fill="#fff" stroke="#5a5560" stroke-width="1"><rect x="608.500" y="689.500" width="11" height="9"/></g><path d="M608.500 692.500 h11 M608.500 695.500 h11 M612.500 689.500 v9 M616.500 689.500 v9" stroke="#5a5560" stroke-width="1"/>
<rect x="626.500" y="688.500" width="12" height="11" fill="#e9ecf1" stroke="#6a6f7a"/><rect x="629.500" y="690.500" width="6" height="7" fill="#fff" stroke="#6a6f7a"/><path d="M631 693 h3 M631 695 h3" stroke="#999" stroke-width=".8"/>
<rect x="644.500" y="688.500" width="12" height="11" fill="#e9ecf1" stroke="#6a6f7a"/><rect x="646" y="690" width="4" height="6" fill="#fff" stroke="#6a6f7a" stroke-width=".8"/><rect x="651" y="690" width="4" height="4" fill="#fff" stroke="#6a6f7a" stroke-width=".8"/>
<defs><linearGradient id="zg" x1="0" y1="0" x2="0" y2="1"><stop offset="0" stop-color="#ffffff"/><stop offset="1" stop-color="#dfe3ea"/></linearGradient></defs>
<circle cx="712.500" cy="693.700" r="7.300" fill="url(#zg)" stroke="#8a8f9a" stroke-width="1"/><path d="M708.500 693.700 h8" stroke="#555" stroke-width="1.600"/>
<circle cx="828.700" cy="693.700" r="7.300" fill="url(#zg)" stroke="#8a8f9a" stroke-width="1"/><path d="M824.700 693.700 h8 M828.700 689.700 v8" stroke="#555" stroke-width="1.600"/>
<path d="M721 693.500 h100" stroke="#8f949e" stroke-width="1"/><path d="M721 694.500 h100" stroke="#f6f7f9" stroke-width="1"/>
<path d="M767.500 687.500 h8 v7.500 l-4 4.500 -4-4.500z" fill="url(#zg)" stroke="#7f848e" stroke-width="1"/>
<g fill="#a9b0bc"><rect x="852" y="696" width="2" height="2"/><rect x="849" y="699" width="2" height="2"/><rect x="852" y="699" width="2" height="2"/><rect x="846" y="702" width="2" height="2"/><rect x="849" y="702" width="2" height="2"/><rect x="852" y="702" width="2" height="2"/></g>
</svg>
</div></div>
<svg class="abs" style="left:0;top:0;position:absolute" width="896" height="745">
<defs><filter id="rs" x="-20%" y="-20%" width="150%" height="160%"><feGaussianBlur stdDeviation="1.500"/></filter></defs>
<rect x="334" y="60" width="57" height="25" rx="9" ry="9" fill="none" stroke="#444" stroke-opacity=".45" stroke-width="5" filter="url(#rs)"/>
<rect x="332" y="57.500" width="59" height="25" rx="9.500" ry="9.500" fill="none" stroke="#f00a0a" stroke-width="5"/>
<path d="M48.500 696.800 v15.800 l3.600-3.400 2.900 6.300 2.600-1.100 -2.900-6.200 h5z" fill="#fff" stroke="#000" stroke-width="1" stroke-linejoin="round"/>
</svg>
</body></html>
